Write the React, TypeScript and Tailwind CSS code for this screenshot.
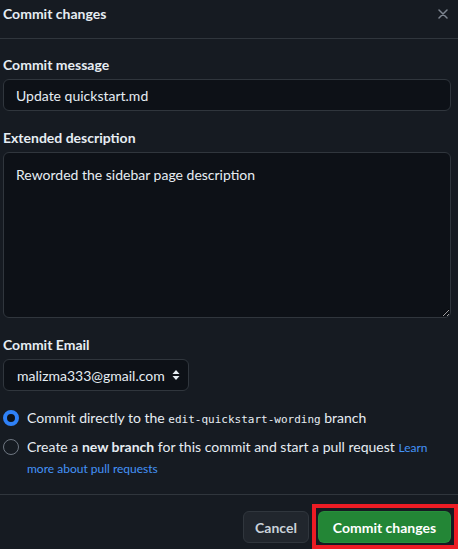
import React from "react";

const sans = "font-['Lato',sans-serif]";

function Label({ children }: { children: React.ReactNode }) {
  return <div className="text-[14px] leading-5 font-bold text-[#e6edf3]">{children}</div>;
}

function Radio({ checked }: { checked?: boolean }) {
  return checked ? (
    <span className="mt-[2px] w-4 h-4 shrink-0 rounded-full border-[4px] border-[#2f81f7] bg-[#0d1117]" />
  ) : (
    <span className="mt-[2px] w-4 h-4 shrink-0 rounded-full border border-[#6e7681]" />
  );
}

export default function App() {
  return (
    <div className={`relative w-[458px] h-[549px] overflow-hidden bg-[#161b22] text-[#e6edf3] ${sans}`}>
      {/* Header */}
      <div className="h-[39px] flex items-start justify-between pl-[3px] pr-[10px] pt-[4px] border-b border-[#30363d]">
        <div className="text-[14px] leading-5 font-bold">Commit changes</div>
        <svg width="10" height="10" viewBox="0 0 10 10" className="mt-[5px]">
          <path d="M1 1L9 9M9 1L1 9" stroke="#7d8590" strokeWidth="1.5" strokeLinecap="round" />
        </svg>
      </div>

      {/* Body */}
      <div className="flex flex-col pl-[3px] pr-[7px] pt-[16px]">
        <Label>Commit message</Label>
        <div className="mt-1 h-[32px] flex items-center rounded-md border border-[#30363d] bg-[#0d1117] px-3 text-[14px]">
          Update quickstart.md
        </div>

        <div className="mt-[17px]">
          <Label>Extended description</Label>
        </div>
        <textarea
          className="mt-1 h-[166px] rounded-md border border-[#30363d] bg-[#0d1117] px-3 pt-[12px] text-[14px] leading-5 text-[#e6edf3] outline-none resize-y [color-scheme:dark]"
          defaultValue="Reworded the sidebar page description"
        />

        <div className="mt-[17px]">
          <Label>Commit Email</Label>
        </div>
        <div className="mt-1 w-[186px] h-[32px] flex items-center justify-between rounded-md border border-[#30363d] bg-[#0d1117] pl-[13px] pr-[8px] text-[14px]">
          <span>malizma333@gmail.com</span>
          <svg width="8" height="12" viewBox="0 0 8 12">
            <path d="M4 1L7.5 5H0.5Z M4 11L0.5 7H7.5Z" fill="#e6edf3" />
          </svg>
        </div>

        <div className="mt-[17px] flex flex-col gap-[7px] text-[14px] leading-5">
          <div className="flex items-start gap-2">
            <Radio checked />
            <span>
              Commit directly to the{" "}
              <code className="font-['DejaVu_Sans_Mono',monospace] text-[11px]">edit-quickstart-wording</code> branch
            </span>
          </div>
          <div className="flex items-start gap-2">
            <Radio />
            <p>
              Create a <b className="font-bold">new branch</b> for this commit and start a pull request{" "}
              <a className="text-[12px] leading-5 text-[#4493f8]">Learn more about pull requests</a>
            </p>
          </div>
        </div>
      </div>

      {/* Footer */}
      <div className="absolute left-0 right-0 top-[494px] border-t border-[#30363d]" />
      <div className="absolute right-[7px] top-[511px] flex gap-[9px]">
        <button className="w-[66px] h-[32px] rounded-md border border-[#30363d] bg-[#21262d] text-[14px] font-bold text-[#c9d1d9]">
          Cancel
        </button>
        <button className="w-[133px] h-[32px] rounded-md border border-[#2ea043]/40 bg-[#238636] text-[14px] font-bold text-white">
          Commit changes
        </button>
      </div>
      <div className="absolute left-[312px] top-[504px] w-[146px] h-[45px] border-[4px] border-[#ed1c24]" />
    </div>
  );
}
